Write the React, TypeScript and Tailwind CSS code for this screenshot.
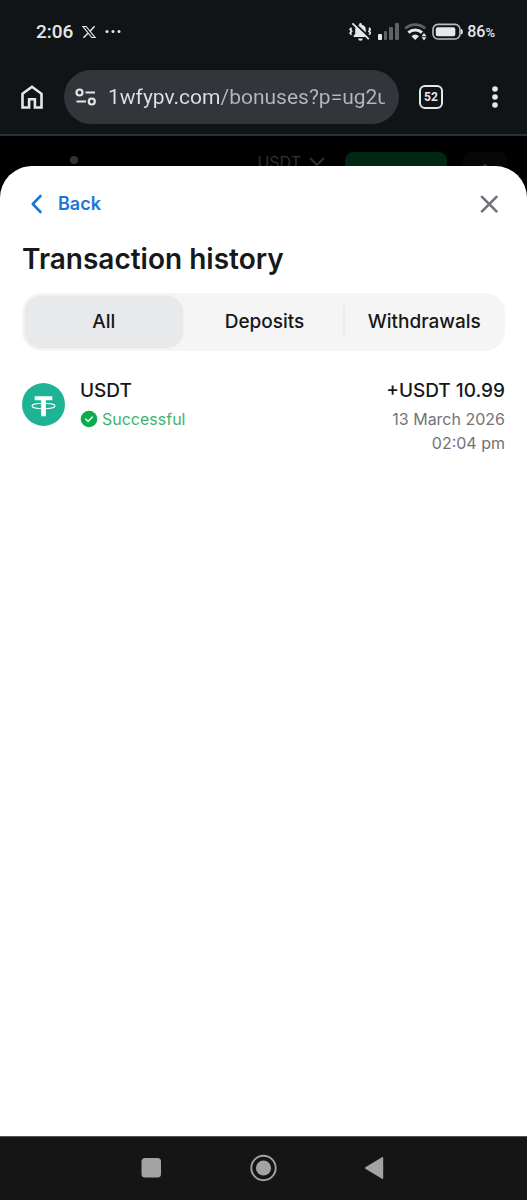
import { useState } from "react";

function StatusBar() {
  return (
    <div className="flex h-16 items-center justify-between pr-8 pl-9 font-['Roboto',sans-serif] text-[#e4e8ea]">
      <div className="flex items-center gap-2">
        <span className="text-[19px] leading-6 font-medium">2:06</span>
        <svg className="size-4" viewBox="0 0 16 16" fill="none" stroke="currentColor" aria-label="X">
          <path d="M2 2.5h3.2l8.8 11h-3.2z" strokeWidth="1.2" />
          <path d="M13.6 2.2 9 7.2M7 9.2l-4.6 4.6" strokeWidth="1.5" />
        </svg>
        <svg className="h-4 w-5" viewBox="0 0 20 16" fill="currentColor" aria-label="More notifications">
          <circle cx="2" cy="7.5" r="1.5" />
          <circle cx="8" cy="7.5" r="1.5" />
          <circle cx="14" cy="7.5" r="1.5" />
        </svg>
      </div>
      <div className="flex items-center gap-1">
        <svg className="h-5 w-6" viewBox="0 0 24 20" aria-label="Silent mode">
          <path
            d="M6.600 15v-1.300l1.600-1.600V8a5.300 5.300 0 0 1 4-5.200V2.200a1.300 1.300 0 0 1 2.600 0v.6a5.300 5.300 0 0 1 4 5.200v4.100l1.600 1.600V15zM11.200 16.500h4.600a2.300 2.300 0 0 1-4.600 0z"
            fill="currentColor"
          />
          <path d="M4.600 5.800l-1.400 1.600 1.400 1.800-1.400 1.800 1.400 1.700M22 5.800l1.400 1.600L22 9.200l1.400 1.800-1.400 1.700" fill="none" stroke="currentColor" strokeWidth="1.800" />
          <path d="M6.800 0.400l16 15.400" stroke="#101417" strokeWidth="2" />
          <path d="M5.400 1.400l16.400 15.800" stroke="currentColor" strokeWidth="1.800" />
        </svg>
        <svg className="h-5 w-6" viewBox="0 0 24 20" aria-label="Mobile signal">
          <rect x="3" y="12" width="4" height="6" rx="1" fill="#e4e8ea" />
          <rect x="9" y="9" width="3" height="9" rx="1" fill="#5d6265" />
          <rect x="14" y="5" width="4" height="13" rx="1" fill="#5d6265" />
          <rect x="20" y="1" width="4" height="17" rx="1" fill="#5d6265" />
        </svg>
        <svg className="h-5 w-6" viewBox="0 0 24 20" fill="none" aria-label="Wi-Fi">
          <path d="M2.200 6.600a14.500 14.500 0 0 1 20 0" stroke="#5d6265" strokeWidth="2.800" />
          <path d="M5.400 10.600a10 10 0 0 1 13.600 0" stroke="currentColor" strokeWidth="3" />
          <path d="M8.400 14.200a5.800 5.800 0 0 1 7.600 0L12.200 18z" fill="currentColor" />
          <path d="M21 11l2.400 3.200h-4.800zM21 18.400l2.400-3.200h-4.800z" fill="currentColor" />
        </svg>
        <svg className="h-5 w-8" viewBox="0 0 32 20" fill="none" aria-label="Battery">
          <rect x="2" y="2.400" width="27" height="14.600" rx="5" stroke="#b9bdbf" strokeWidth="1.600" />
          <rect x="4.800" y="5.200" width="19.500" height="9" rx="2" fill="currentColor" />
          <path d="M30.400 7.200c1.200.6 1.200 4.400 0 5z" fill="currentColor" stroke="currentColor" />
        </svg>
        <span className="text-base leading-6 font-medium">
          86<span className="text-[13px]">%</span>
        </span>
      </div>
    </div>
  );
}

function BrowserBar() {
  return (
    <div className="flex h-18 items-start border-b-2 border-[#2b3033] pt-1.5 pr-4 pl-4 text-[#e4e7ea]">
      <button type="button" aria-label="Home" className="flex h-13.5 w-8 shrink-0 items-center justify-center">
        <svg className="size-7" viewBox="0 0 28 28" fill="none" stroke="currentColor" strokeWidth="2.600">
          <path d="M4.500 24.500V10.800L14 3.800l9.500 7v13.700h-6.600v-8.200h-5.800v8.200z" />
        </svg>
      </button>
      <div className="ml-4 flex h-13.5 min-w-0 flex-1 items-center gap-2.5 rounded-full bg-[#323539] pr-3.5 pl-2.5">
        <button type="button" aria-label="Site settings" className="shrink-0">
          <svg className="size-6" viewBox="0 0 24 24" fill="none" stroke="currentColor" strokeWidth="2.200">
            <circle cx="5.500" cy="7.500" r="3" />
            <path d="M11.500 7.500H21M2.500 16.500H12" />
            <circle cx="17.800" cy="16.500" r="3" />
          </svg>
        </button>
        <input
          type="text"
          aria-label="Address"
          defaultValue="1wfypv.com/bonuses?p=ug2u"
          className="min-w-0 flex-1 bg-linear-to-r from-[#dfe2e6] from-40% to-[#b4b7bd] to-40% bg-clip-text font-['Roboto',sans-serif] text-[21px] leading-8 text-transparent outline-none"
        />
      </div>
      <button type="button" aria-label="52 open tabs" className="ml-4 flex h-13.5 w-8 shrink-0 items-center justify-center">
        <span className="flex size-6 items-center justify-center rounded-md border-2 border-current font-['Roboto',sans-serif] text-xs font-bold">
          52
        </span>
      </button>
      <button type="button" aria-label="Menu" className="ml-8 flex h-13.5 w-8 shrink-0 items-center justify-center">
        <svg className="size-6" viewBox="0 0 24 24" fill="currentColor">
          <circle cx="12" cy="4" r="2.800" />
          <circle cx="12" cy="12" r="2.800" />
          <circle cx="12" cy="20" r="2.800" />
        </svg>
      </button>
    </div>
  );
}

function DimmedHeader() {
  return (
    <div aria-hidden="true" className="flex h-7.5 items-start overflow-hidden pr-5">
      <span className="mt-5 ml-17.5 size-2 shrink-0 rounded-full bg-[#333333]" />
      <span className="mt-4 ml-auto text-base leading-5 text-[#303030]">USDT</span>
      <svg className="mt-5 ml-2 h-3 w-4 shrink-0" viewBox="0 0 16 12" fill="none" stroke="#303030" strokeWidth="2">
        <path d="M1 2l7 7 7-7" />
      </svg>
      <span className="mt-4 ml-5 h-10 w-25.5 shrink-0 rounded-lg bg-[#002811]" />
      <span className="mt-4 ml-4 flex h-10 w-11 shrink-0 justify-center rounded-lg bg-[#070707] pt-3">
        <span className="size-1 rounded-full bg-[#333333]" />
      </span>
    </div>
  );
}

const tabs = ["All", "Deposits", "Withdrawals"];

function HistoryTabs() {
  const [active, setActive] = useState("All");
  return (
    <div role="tablist" aria-label="Transaction type" className="mt-4 flex h-14.5 items-center rounded-[20px] bg-[#f5f5f5] p-0.5">
      {tabs.map((tab, i) => (
        <div key={tab} className="flex h-full flex-1 items-center">
          {i > 0 && <span className={i === 2 ? "h-8 w-0.5 bg-[#ebebec]" : "h-8 w-0.5"} />}
          <button
            type="button"
            role="tab"
            aria-selected={active === tab}
            onClick={() => setActive(tab)}
            className={
              active === tab
                ? "h-full flex-1 rounded-[18px] border border-[#efeff0] bg-[#e8e9eb] text-[19px] font-medium"
                : "h-full flex-1 rounded-[18px] text-[19px] font-medium"
            }
          >
            {tab}
          </button>
        </div>
      ))}
    </div>
  );
}

function TetherIcon() {
  return (
    <svg className="mt-2 size-[43px] shrink-0" viewBox="0 0 44 44" aria-label="Tether">
      <circle cx="22" cy="22" r="22" fill="#1fb395" />
      <path d="M13 13.500h18v4.200h-6.600v16.300h-4.800V17.700H13z" fill="#fff" />
      <ellipse cx="22" cy="23.500" rx="11.800" ry="2.800" fill="none" stroke="#fff" strokeWidth="1.100" />
    </svg>
  );
}

function Transaction() {
  return (
    <article className="mt-6 flex items-start">
      <TetherIcon />
      <div className="ml-[15px] flex-1">
        <h2 className="text-[19px] leading-8 font-medium">USDT</h2>
        <p className="flex items-center gap-1 text-base leading-6 text-[#3eb46c]">
          <svg className="size-4.5" viewBox="0 0 18 18" fill="none" aria-hidden="true">
            <circle cx="9" cy="9" r="8.300" fill="#09ad4c" />
            <path d="M5.800 9.200l2.300 2.200 4.200-4.300" stroke="#d9f5e4" strokeWidth="1.600" strokeLinecap="round" strokeLinejoin="round" />
          </svg>
          Successful
        </p>
      </div>
      <div className="text-right">
        <p className="text-[19px] leading-8 font-medium">+USDT 10.99</p>
        <p className="text-base leading-6 text-[#717376]">13 March 2026</p>
        <p className="text-base leading-6 text-[#717376]">02:04 pm</p>
      </div>
    </article>
  );
}

function NavigationBar() {
  return (
    <nav aria-label="System navigation" className="flex h-16 items-center justify-center gap-20 border-t border-[#555555] bg-[#151515] pb-0.5 text-[#a3a3a3]">
      <button type="button" aria-label="Recent apps">
        <svg className="size-8" viewBox="0 0 32 32" fill="currentColor">
          <rect x="5.500" y="6" width="19.500" height="19.500" rx="3.500" />
        </svg>
      </button>
      <button type="button" aria-label="Home screen">
        <svg className="size-8" viewBox="0 0 32 32" fill="currentColor">
          <circle cx="15.500" cy="16" r="12.200" fill="none" stroke="currentColor" strokeWidth="1.900" />
          <circle cx="15.500" cy="16" r="7.600" />
        </svg>
      </button>
      <button type="button" aria-label="Go back">
        <svg className="size-8" viewBox="0 0 32 32" fill="currentColor">
          <path d="M5.400 15.200 22 5.200q1.200-.6 1.200.8v20q0 1.400-1.200.8L5.400 16.800q-1-.8 0-1.600z" />
        </svg>
      </button>
    </nav>
  );
}

export default function App() {
  return (
    <div className="flex min-h-screen flex-col bg-[#101417] font-['Inter',sans-serif]">
      <StatusBar />
      <BrowserBar />
      <div className="flex flex-1 flex-col bg-black">
        <DimmedHeader />
        <main className="flex-1 rounded-t-[32px] bg-white px-5.5 pt-5 text-[#17181a]">
          <div className="flex h-9 items-center justify-between">
            <button type="button" className="flex items-center gap-3 pl-1 text-lg font-semibold text-[#1b76d8]">
              <svg className="size-5" viewBox="0 0 20 20" fill="none" stroke="currentColor" strokeWidth="2.600" strokeLinecap="round" strokeLinejoin="round">
                <path d="M14.500 2 6.800 10l7.700 8" />
              </svg>
              Back
            </button>
            <button type="button" aria-label="Close" className="mr-1.5 text-[#6e737c]">
              <svg className="size-5" viewBox="0 0 20 20" fill="none" stroke="currentColor" strokeWidth="2.600" strokeLinecap="round">
                <path d="M3 2.800l14.500 14.500M17.500 2.800L3 17.300" />
              </svg>
            </button>
          </div>
          <h1 className="mt-[19px] text-[28px] leading-9 font-semibold">Transaction history</h1>
          <HistoryTabs />
          <Transaction />
        </main>
      </div>
      <NavigationBar />
    </div>
  );
}
